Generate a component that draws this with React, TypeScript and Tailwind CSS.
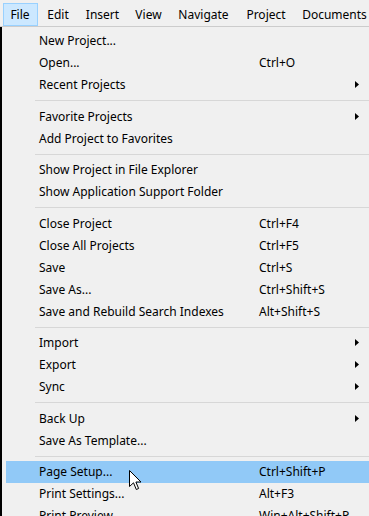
import React from "react";

type Item =
  | { sep: true }
  | { label: string; shortcut?: string; sub?: boolean; active?: boolean };

const items: Item[] = [
  { label: "New Project..." },
  { label: "Open...", shortcut: "Ctrl+O" },
  { label: "Recent Projects", sub: true },
  { sep: true },
  { label: "Favorite Projects", sub: true },
  { label: "Add Project to Favorites" },
  { sep: true },
  { label: "Show Project in File Explorer" },
  { label: "Show Application Support Folder" },
  { sep: true },
  { label: "Close Project", shortcut: "Ctrl+F4" },
  { label: "Close All Projects", shortcut: "Ctrl+F5" },
  { label: "Save", shortcut: "Ctrl+S" },
  { label: "Save As...", shortcut: "Ctrl+Shift+S" },
  { label: "Save and Rebuild Search Indexes", shortcut: "Alt+Shift+S" },
  { sep: true },
  { label: "Import", sub: true },
  { label: "Export", sub: true },
  { label: "Sync", sub: true },
  { sep: true },
  { label: "Back Up", sub: true },
  { label: "Save As Template..." },
  { sep: true },
  { label: "Page Setup...", shortcut: "Ctrl+Shift+P", active: true },
  { label: "Print Settings...", shortcut: "Alt+F3" },
  { label: "Print Preview...", shortcut: "Win+Alt+Shift+P" },
];

const menus: { label: string; w: string }[] = [
  { label: "Edit", w: "w-[40px]" },
  { label: "Insert", w: "w-[49px]" },
  { label: "View", w: "w-[43px]" },
  { label: "Navigate", w: "w-[67px]" },
  { label: "Project", w: "w-[58px]" },
  { label: "Documents", w: "w-[79px]" },
];

function Cursor() {
  return (
    <svg
      className="absolute left-[123px] top-[9px]"
      width="13"
      height="21"
      viewBox="0 0 13 21"
    >
      <path
        d="M0.5 0.5 L0.5 16.5 L4.5 12.8 L7.3 19.5 L9.6 18.5 L6.9 12 L12 12 Z"
        fill="#fff"
        stroke="#000"
        strokeWidth="1"
        strokeLinejoin="miter"
      />
    </svg>
  );
}

export default function App() {
  return (
    <div
      className="w-[369px] h-[516px] overflow-hidden bg-[#f0f0f0] text-black text-[12px] flex flex-col"
      style={{ fontFamily: '"Noto Sans", "Open Sans", sans-serif' }}
    >
      <div className="h-[27px] shrink-0 flex items-start border-b border-[#cccccc] bg-[#f0f0f0] overflow-hidden">
        <div className="flex items-center pt-[3px] pl-[3px] shrink-0">
          <div className="w-[35px] h-[23px] flex items-center justify-center bg-[#cce8ff] border border-[#99d1ff] shrink-0 pr-[1px]">
            File
          </div>
          {menus.map((m) => (
            <div
              key={m.label}
              className={m.w + " h-[23px] flex items-center justify-center shrink-0 whitespace-nowrap"}
            >
              {m.label}
            </div>
          ))}
        </div>
      </div>
      <div className="flex flex-1 min-h-0">
        <div className="w-[2px] bg-black shrink-0" />
        <div className="flex-1 pt-[3px] pl-[4px] flex flex-col">
          {items.map((it, i) =>
            "sep" in it ? (
              <div key={i} className="h-[9.5px] pt-[4px] pl-[29px] shrink-0">
                <div className="h-px bg-[#d7d7d7]" />
              </div>
            ) : (
              <div
                key={i}
                className={
                  "relative h-[22px] shrink-0 flex items-center pl-[33px] " +
                  (it.active ? "bg-[#91c9f7]" : "")
                }
              >
                <span className="w-[220px] whitespace-nowrap">{it.label}</span>
                {it.shortcut && (
                  <span className="whitespace-nowrap">{it.shortcut}</span>
                )}
                {it.sub && (
                  <svg
                    className="absolute left-[349px] top-[7px]"
                    width="4"
                    height="7"
                    viewBox="0 0 4 7"
                  >
                    <path d="M0 0 L4 3.5 L0 7 Z" fill="#000" />
                  </svg>
                )}
                {it.active && <Cursor />}
              </div>
            )
          )}
        </div>
      </div>
    </div>
  );
}
